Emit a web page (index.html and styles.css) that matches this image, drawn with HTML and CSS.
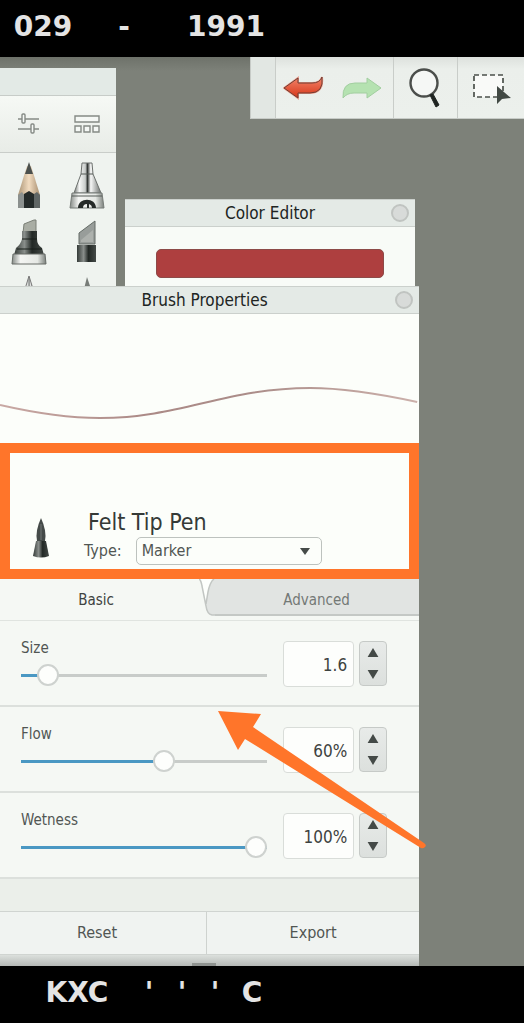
FILE: index.html
```html
<!DOCTYPE html>
<html lang="en">
<head>
<meta charset="utf-8">
<meta name="viewport" content="width=device-width, initial-scale=1">
<title>Brush Properties</title>
<link rel="stylesheet" href="styles.css">
</head>
<body>
<header class="band band-top"><span>029</span><span>-</span><span>1991</span></header>
<main class="desktop">
  <nav class="toolbar" aria-label="Main tools">
    <div class="grip"></div>
    <div class="tool-group history">
      <button aria-label="Undo"><svg width="42" height="24" viewBox="0 0 42 24"><defs><linearGradient id="red" x2="0" y2="1"><stop stop-color="#f2846a"/><stop offset="1" stop-color="#d63518"/></linearGradient></defs><path d="M1 12 15 2v5h14q8 0 10-6 2 16-12 16H15v5Z" fill="url(#red)" stroke="#e9a090" stroke-width="2"/><path d="M1 12 15 2v5h14q8 0 10-6 2 16-12 16H15v5Z" fill="url(#red)" stroke="#713d33"/></svg></button>
      <button aria-label="Redo"><svg width="42" height="24" viewBox="0 0 42 24"><path d="M40 12 26 2v5H14Q1 7 2 22q4-5 11-5h13v5Z" fill="#b5e2b1" stroke="#a2cea0"/></svg></button>
    </div>
    <div class="tool-group zoom"><button aria-label="Zoom"><svg width="36" height="44" viewBox="0 0 36 44"><circle cx="16" cy="17" r="13.5" fill="#f5f7f5" stroke="#4b4e4b" stroke-width="2.4"/><path d="m22 29 3-1 6 11-3 2Z" fill="#1f2421" stroke="#1f2421"/></svg></button></div>
    <div class="tool-group"><button aria-label="Select"><svg width="40" height="36" viewBox="0 0 40 36"><path d="M3 5h29v22H3Z" fill="#f9faf8" stroke="#4b504b" stroke-width="1.7" stroke-dasharray="5 3"/><path d="M26 16v18l5-5 9-1Z" fill="#424944"/></svg></button></div>
  </nav>

  <section class="palette" aria-label="Brush palette">
    <div class="palette-title"></div>
    <div class="palette-modes">
      <button aria-label="Brush settings"><svg width="24" height="24" viewBox="0 0 24 24" fill="#f5f8f5" stroke="#858a85" stroke-width="1.4"><path d="M1 7h21M1 17h21"/><rect x="5" y="2" width="3" height="9" rx="1"/><rect x="14" y="12" width="3" height="9" rx="1"/></svg></button>
      <button aria-label="Brush library"><svg width="26" height="22" viewBox="0 0 26 22" fill="#f5f8f5" stroke="#858a85" stroke-width="1.4"><path d="M1 3h24v6H1ZM1 13h6v6H1ZM10 13h6v6h-6ZM19 13h6v6h-6Z"/></svg></button>
    </div>
    <div class="brushes">
      <button aria-label="Pencil"><svg width="26" height="48" viewBox="0 0 26 48"><defs><linearGradient id="wood"><stop stop-color="#aa9476"/><stop offset=".5" stop-color="#f2dcc0"/><stop offset="1" stop-color="#a78e70"/></linearGradient></defs><path d="M11 5h4l9 29H2Z" fill="url(#wood)"/><path d="m13 1-4 12h8Z" fill="#4b504d"/><path d="m2 34 4-3 3 4v12H2Z" fill="#8b908e"/><path d="m8 33 5-3 5 3v14H8Z" fill="#242a29"/><path d="m18 33 3-2 3 3v13h-6Z" fill="#606665"/></svg></button>
      <button aria-label="Airbrush"><svg width="36" height="48" viewBox="0 0 36 48"><defs><linearGradient id="chrome"><stop stop-color="#6d716e"/><stop offset=".2" stop-color="#f6f7f6"/><stop offset=".42" stop-color="#c8ccca"/><stop offset=".5" stop-color="#343836"/><stop offset=".62" stop-color="#f8f9f8"/><stop offset="1" stop-color="#6d716e"/></linearGradient><linearGradient id="steel"><stop stop-color="#858a86"/><stop offset=".25" stop-color="#f4f5f3"/><stop offset=".75" stop-color="#e5e8e4"/><stop offset="1" stop-color="#7a7f7b"/></linearGradient></defs><path d="M13 2h10l1 11 8 19H5l7-19Z" fill="url(#chrome)" stroke="#6d716e"/><path d="M3 32h30l2 15H1Z" fill="url(#steel)" stroke="#777c78"/><path d="M3 35h30M12 13h12" stroke="#555a57" fill="none"/><path d="M9 47c0-11 18-11 18 0h-4q0-3-3-4v4h-2v-4q-4 0-4 4Z" fill="#252a28"/></svg></button>
      <button aria-label="Chisel marker"><svg width="38" height="48" viewBox="0 0 38 48"><defs><linearGradient id="dark"><stop stop-color="#343a37"/><stop offset=".35" stop-color="#898e8b"/><stop offset=".6" stop-color="#222825"/><stop offset="1" stop-color="#444a47"/></linearGradient></defs><path d="m14 6 10-4h2v13H13Z" fill="#a9ada4" stroke="#7a7f76"/><path d="M12 13h15v8q0 6 5 9l2 7H4l2-7q5-4 6-9Z" fill="url(#dark)"/><path d="M12 21h15M7 31h25" stroke="#191e1b"/><path d="M3 36h32l1 10H2Z" fill="url(#steel)" stroke="#666b67"/></svg></button>
      <button aria-label="Flat marker"><svg width="24" height="46" viewBox="0 0 24 46"><path d="M4 14 20 2v23H4Z" fill="#989d9a" stroke="#646b66"/><path d="m6 21 12-10v12H6Z" fill="#adb1ad"/><path d="M2 26h19v17H2Z" fill="url(#dark)"/></svg></button>
      <button aria-label="Pen"><svg width="12" height="14" viewBox="0 0 12 14"><path d="M6 1 2 14h8Z" fill="url(#chrome)" stroke="#777"/></svg></button>
      <button aria-label="Brush"><svg width="12" height="14" viewBox="0 0 12 14"><path d="M6 2 3 14h7Z" fill="#777c78"/></svg></button>
    </div>
  </section>

  <section class="color-editor">
    <div class="titlebar"><h2>Color Editor</h2><button class="close" aria-label="Close Color Editor"></button></div>
    <button class="swatch" aria-label="Current color"></button>
  </section>

  <section class="properties">
    <div class="titlebar"><h2>Brush Properties</h2><button class="close" aria-label="Close Brush Properties"></button></div>
    <div class="preview"><svg viewBox="0 0 419 128" preserveAspectRatio="none" fill="none"><defs><linearGradient id="stroke"><stop stop-color="#c9a9a4"/><stop offset=".35" stop-color="#ab8a86"/><stop offset=".6" stop-color="#ab8d89"/><stop offset="1" stop-color="#cbb0aa"/></linearGradient></defs><path d="M0 91C35 99 65 104 100 104C180 104 226 74 310 74C345 74 380 80 417 88" stroke="url(#stroke)" stroke-width="2"/></svg></div>
    <div class="identity">
      <svg class="tip" width="18" height="42" viewBox="0 0 18 42"><path d="M9 1Q3 14 5 24h8q2-10-4-23Z" fill="#454b49"/><path d="M9 7v16" stroke="#737876"/><path d="M4 24h10l3 15q-8 3-16 0Z" fill="url(#dark)"/></svg>
      <div class="identity-text">
        <h1>Felt Tip Pen</h1>
        <div class="type-row"><label for="type">Type:</label><div class="select-wrap"><select id="type"><option>Marker</option></select><svg width="10" height="7" viewBox="0 0 10 7"><path d="M0 0h10L5 7Z" fill="#454b48"/></svg></div></div>
      </div>
    </div>
    <div class="tabs" role="tablist">
      <button role="tab" aria-selected="true">Basic</button>
      <button role="tab" aria-selected="false" class="inactive">Advanced</button>
      <svg class="tab-edge" width="16" height="37" viewBox="0 0 16 37"><path d="M0 0h16v37H0Z" fill="#f5f8f4"/><path d="M1 0h12Q9 9 7 23Z" fill="#fdfffc"/><path d="M16 0h-1q-4 2-6 13L7 24q-1 9 6 12h3Z" fill="#e1e4e2"/><path d="M0 0q2 1 3 7l4 20q1 8 6 9h3M7 25 9 13q2-10 6-13" fill="none" stroke="#c2c6c3" stroke-width="1.5"/></svg>
    </div>
    <div class="setting">
      <div class="slider"><label for="size">Size</label><input id="size" type="range" value="7" style="--fill:7%"></div>
      <input class="value" aria-label="Size value" value="1.6">
      <div class="stepper"><button aria-label="Increase size"><svg viewBox="0 0 12 10"><path d="m6 0 6 10H0Z"/></svg></button><button aria-label="Decrease size"><svg viewBox="0 0 12 10"><path d="M0 0h12L6 10Z"/></svg></button></div>
    </div>
    <div class="setting">
      <div class="slider"><label for="flow">Flow</label><input id="flow" type="range" value="59" style="--fill:59%"></div>
      <input class="value" aria-label="Flow value" value="60%">
      <div class="stepper"><button aria-label="Increase flow"><svg viewBox="0 0 12 10"><path d="m6 0 6 10H0Z"/></svg></button><button aria-label="Decrease flow"><svg viewBox="0 0 12 10"><path d="M0 0h12L6 10Z"/></svg></button></div>
    </div>
    <div class="setting">
      <div class="slider"><label for="wetness">Wetness</label><input id="wetness" type="range" value="100" style="--fill:100%"></div>
      <input class="value" aria-label="Wetness value" value="100%">
      <div class="stepper"><button aria-label="Increase wetness"><svg viewBox="0 0 12 10"><path d="m6 0 6 10H0Z"/></svg></button><button aria-label="Decrease wetness"><svg viewBox="0 0 12 10"><path d="M0 0h12L6 10Z"/></svg></button></div>
    </div>
    <div class="spacer"></div>
    <div class="actions"><button>Reset</button><button>Export</button></div>
    <div class="resize"><i></i></div>
    <svg class="pointer" width="210" height="140" viewBox="0 0 210 140"><path d="m0 0 43 3-8 13 171 116q3 2 1 4t-4 1L27 28l-7 11Z" fill="#ff752a"/></svg>
  </section>
</main>
<footer class="band band-bottom"><span>KXC</span><span>'</span><span>'</span><span>'</span><span>C</span></footer>
</body>
</html>
```
FILE: styles.css
```css
* { box-sizing: border-box; }
body {
  margin: 0;
  min-height: 100vh;
  display: flex;
  flex-direction: column;
  background: #7d8179;
  color: #515653;
  font: 15px/20px "DejaVu Sans Condensed", "Noto Sans", sans-serif;
}
button, input, select { font: inherit; color: inherit; }
button { padding: 0; border: 0; background: none; }
h1, h2 { margin: 0; font-weight: 400; }
svg { display: block; }

.band {
  display: grid;
  align-items: center;
  flex: none;
  background: #000;
  color: #e4e4e4;
  font: bold 28px/32px "DejaVu Sans", sans-serif;
  text-align: center;
}
.band-top { height: 57px; padding-bottom: 4px; grid-template-columns: 86px 76px 128px; }
.band-bottom { height: 58px; padding: 0 0 4px 22px; grid-template-columns: 110px 34px 32px 34px 40px; }

.desktop {
  position: relative;
  flex: 1;
  display: flex;
  flex-direction: column;
  padding-top: 229px;
  background: linear-gradient(#6e726a, #7d8179 14px);
}

.toolbar {
  position: absolute;
  top: 0;
  right: 0;
  display: flex;
  width: 274px;
  height: 62px;
  background: linear-gradient(#dde1dd, #ebefeb 12px, #ecf0ec);
  border: 1px solid #c7cbc7;
  border-width: 0 0 1px 1px;
}
.grip { width: 24px; background: #e2e7e3; }
.tool-group {
  flex: 1;
  display: flex;
  align-items: center;
  justify-content: center;
  border-left: 1px solid #c9cdc9;
}
.history { flex: none; width: 118px; gap: 16px; padding-right: 4px; }
.zoom { flex: none; width: 64px; }

.palette {
  position: absolute;
  top: 11px;
  left: 0;
  width: 116px;
  height: 220px;
  overflow: hidden;
  background: #eff3ef;
}
.palette-title { height: 28px; background: #e3eae6; border-bottom: 1px solid #c7ccc8; }
.palette-modes {
  display: grid;
  grid-template-columns: 1fr 1fr;
  height: 57px;
  background: linear-gradient(#f6f9f5, #e8ece7);
  border-bottom: 1px solid #c9cdc9;
}
.palette-modes button, .brushes button { display: grid; place-items: center; }
.brushes {
  display: grid;
  grid-template-columns: 1fr 1fr;
  grid-template-rows: 48px 48px 14px;
  row-gap: 9px;
  padding-top: 8px;
}

.titlebar {
  display: flex;
  align-items: center;
  height: 28px;
  padding: 0 6px 0 24px;
  background: #e4eae6;
  border: 1px solid #cbd0cc;
  border-width: 1px 0;
}
.properties .titlebar { padding-left: 14px; }
h2 { flex: 1; text-align: center; font-size: 17px; line-height: 24px; color: #202422; }
.close {
  width: 18px;
  height: 18px;
  border: 2px solid #c0c4c1;
  border-radius: 50%;
  background: #d8dbd9;
}

.color-editor {
  position: absolute;
  left: 125px;
  top: 142px;
  width: 290px;
  height: 92px;
  background: #f8fbf7;
}
.swatch {
  display: block;
  width: 228px;
  height: 29px;
  margin: 22px auto 0;
  border: 1px solid #8d4a48;
  border-radius: 5px;
  background: #ae3f3f;
}

.properties {
  position: relative;
  width: 80%;
  flex: 1;
  display: flex;
  flex-direction: column;
  background: #f5f8f4;
}
.preview { height: 129px; background: #fcfefa; }
.preview svg { width: 100%; height: 128px; }
.identity {
  display: flex;
  align-items: flex-end;
  gap: 34px;
  height: 136px;
  padding: 0 10px 4px 22px;
  border: 10px solid #ff752a;
  background: #fcfefa;
}
.tip { margin-bottom: 6px; }
.identity-text { flex: 1; }
h1 { padding-left: 4px; font-size: 23px; line-height: 30px; color: #353a37; }
.type-row { display: flex; align-items: center; gap: 14px; font-size: 16px; }
.select-wrap { display: grid; align-items: center; justify-items: end; width: 186px; }
.select-wrap > * { grid-area: 1 / 1; }
.select-wrap svg { margin-right: 12px; pointer-events: none; }
select {
  appearance: none;
  width: 100%;
  height: 28px;
  padding: 0 5px;
  border: 1px solid #bdc2be;
  border-radius: 5px;
  background: #fcfefa;
}

.tabs {
  position: relative;
  display: grid;
  grid-template-columns: 206px 1fr;
  height: 42px;
  padding-bottom: 4px;
  border-bottom: 1px solid #e0e4e0;
}
.tabs button { padding: 4px 14px 0 0; color: #3e4340; }
.tabs .inactive {
  padding: 6px 0 0 8px;
  background: #e1e4e2;
  border-bottom: 2px solid #c4c8c5;
  color: #747976;
}
.tab-edge { position: absolute; left: 199px; top: 0; }

.setting {
  display: flex;
  height: 86px;
  padding: 20px 32px 0 21px;
  border-bottom: 2px solid #dce0dc;
}
.slider { flex: 1; min-width: 0; margin-right: 16px; }
.slider label { display: block; height: 23px; line-height: 14px; }
.slider input {
  display: block;
  appearance: none;
  width: 100%;
  height: 22px;
  margin: 0;
  background: linear-gradient(90deg, #4a98c3 var(--fill), #c8ccc9 var(--fill)) center / 100% 3px no-repeat;
}
.slider input::-webkit-slider-thumb {
  appearance: none;
  width: 22px;
  height: 22px;
  border: 2px solid #ced2cf;
  border-radius: 50%;
  background: #fdfefc;
}
.value {
  width: 71px;
  height: 46px;
  padding: 2px 6px 0;
  border: 1px solid #d9ddd9;
  border-radius: 4px;
  background: #fdfefc;
  color: #3d4240;
  font-size: 17px;
  text-align: right;
}
.stepper {
  display: grid;
  width: 28px;
  height: 45px;
  margin-left: 5px;
  border: 1px solid #c6cac7;
  border-radius: 4px;
  background: linear-gradient(#e8ebe9, #dce0dd);
}
.stepper button { display: grid; place-items: center; }
.stepper svg { width: 12px; height: 9px; fill: #444a47; }

.spacer { height: 32px; background: #ebefea; }
.actions {
  display: grid;
  grid-template-columns: 206px 1fr;
  height: 44px;
  border: 1px solid #d0d4d1;
  border-width: 1px 0;
  background: #f0f3f1;
  font-size: 16px;
}
.actions button { padding-right: 12px; }
.actions button + button { padding: 0; border-left: 1px solid #ced2cf; }
.resize {
  flex: 1;
  display: flex;
  align-items: flex-end;
  justify-content: center;
  min-height: 11px;
  padding-right: 12px;
  background: linear-gradient(#dce0dd, #b4b8b5);
}
.resize i { width: 24px; height: 3px; background: #8f9390; }
.pointer { position: absolute; left: 218px; top: 425px; }
```
